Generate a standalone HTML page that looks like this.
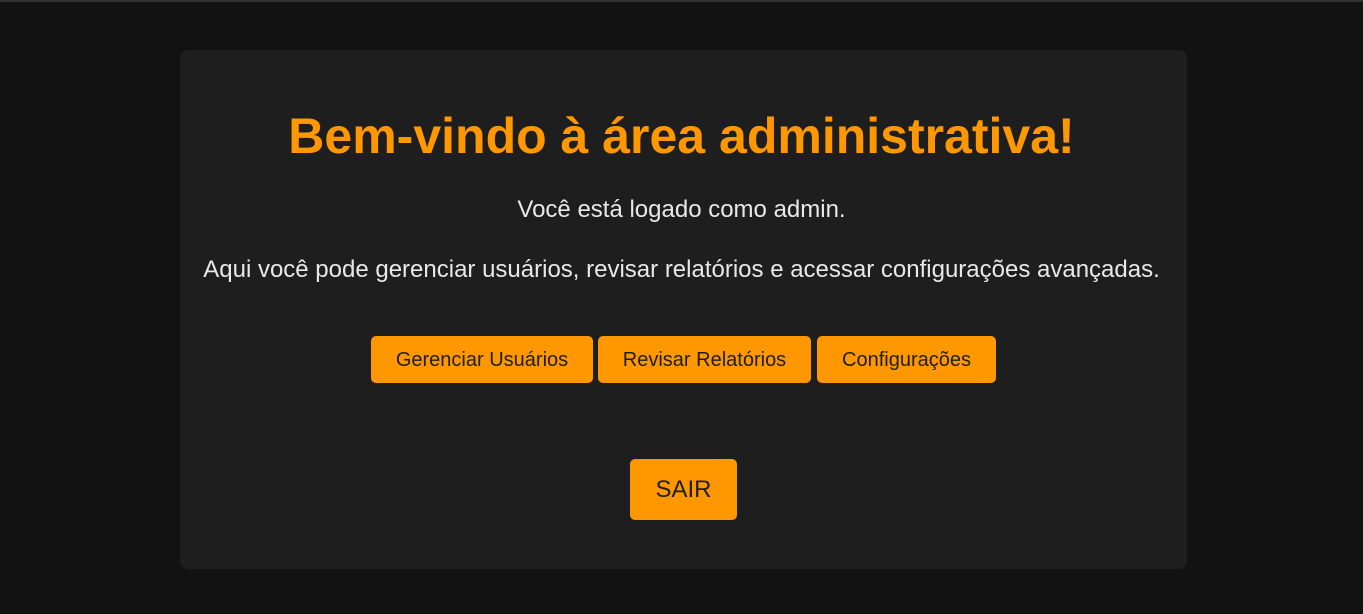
<!DOCTYPE html>
<html><head><meta charset="utf-8"><style>
body{margin:0;width:1363px;height:614px;background:#121212;font-family:"Liberation Sans",Arial,sans-serif;position:relative;overflow:hidden}
.top{position:absolute;left:0;top:0;width:1363px;height:2px;background:#333}
.card{position:absolute;left:180px;top:50px;width:1007px;height:519px;background:#1e1e1e;border-radius:8px}
.t{position:absolute;left:0;width:1363px;text-align:center;white-space:nowrap}
h1{margin:0;color:#ff9800;font-size:50px;font-weight:bold;top:107px}
.p{color:#e8e8e8;font-size:24px}
.b{position:absolute;background:#ff9800;color:#1e1e1e;border-radius:5px;text-align:center;font-size:20px;height:47px;line-height:48px}
</style></head><body>
<div class="top"></div>
<div class="card"></div>
<h1 class="t">Bem-vindo à área administrativa!</h1>
<div class="t p" style="top:196px">Você está logado como admin.</div>
<div class="t p" style="top:256px">Aqui você pode gerenciar usuários, revisar relatórios e acessar configurações avançadas.</div>
<div class="b" style="left:371px;top:336px;width:222px">Gerenciar Usuários</div>
<div class="b" style="left:598px;top:336px;width:213px">Revisar Relatórios</div>
<div class="b" style="left:817px;top:336px;width:179px">Configurações</div>
<div class="b" style="left:630px;top:459px;width:107px;height:61px;line-height:62px;font-size:24px">SAIR</div>
</body></html>
